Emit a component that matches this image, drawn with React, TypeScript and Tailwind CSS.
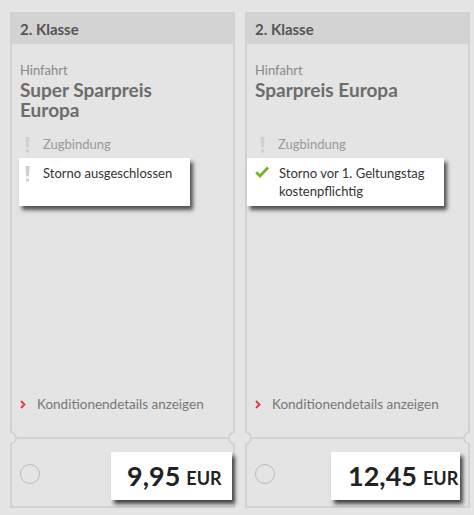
import type { ReactNode } from "react";

type Offer = {
  title: string;
  note: ReactNode;
  noteIcon: "warn" | "check";
  noteBox: string;
  noteRow: string;
  iconSlot: string;
  price: string;
  priceBox: string;
};

const offers: Offer[] = [
  {
    title: "Super Sparpreis Europa",
    note: "Storno ausgeschlossen",
    noteIcon: "warn",
    noteBox: "ml-[7px] w-[171px]",
    noteRow: "pl-[6px]",
    iconSlot: "w-[18px]",
    price: "9,95",
    priceBox: "ml-[99px] w-[121px] pl-[16px]",
  },
  {
    title: "Sparpreis Europa",
    note: (
      <>
        Storno vor 1. Geltungstag
        <br />
        kostenpflichtig
      </>
    ),
    noteIcon: "check",
    noteBox: "ml-0 w-[197px]",
    noteRow: "pl-[8px]",
    iconSlot: "w-[24px]",
    price: "12,45",
    priceBox: "ml-[84px] w-[129px] pl-[17px]",
  },
];

function Bang() {
  return (
    <svg width="5" height="16" viewBox="0 0 5 16" className="shrink-0">
      <path d="M0.4 0 H4.6 L3.8 10.5 H1.2 Z" fill="#cfcfcf" />
      <rect x="1" y="12.5" width="3" height="3" fill="#cfcfcf" />
    </svg>
  );
}

function Check() {
  return (
    <svg width="14" height="12" viewBox="0 0 14 12" className="shrink-0">
      <path d="M1.2 6.2 L5 10 L13 1.5" fill="none" stroke="#78b41e" strokeWidth="2.8" />
    </svg>
  );
}

function Notch({ side }: { side: "left" | "right" }) {
  return (
    <div
      className={`absolute top-[-8px] h-[14px] w-[8px] overflow-hidden ${
        side === "left" ? "left-[-2px]" : "right-[-2px]"
      }`}
    >
      <div
        className={`h-[14px] w-[14px] rounded-full border-2 border-[#d2d2d2] bg-[#e5e5e5] ${
          side === "left" ? "-ml-[7px]" : "ml-[1px]"
        }`}
      />
    </div>
  );
}

function OfferCard({ offer }: { offer: Offer }) {
  return (
    <div className="flex h-[496px] w-[225px] flex-col border-2 border-[#d2d2d2] bg-[#e4e4e4]">
      <div className="flex h-[30px] items-center bg-[#d3d3d3] px-[8px] text-[15px] font-bold text-[#555]">
        2. Klasse
      </div>

      <div className="flex flex-1 flex-col pt-[18px]">
        <div className="px-[8px] text-[13px] leading-[16px] text-[#888]">Hinfahrt</div>
        <h2 className="mt-[2px] h-[40px] max-w-[200px] pl-[8px] text-[19px] font-bold leading-[20px] text-[#6c6c6c]">
          {offer.title}
        </h2>

        <div className="mt-[16px] flex h-[18px] items-center text-[13px] text-[#999]">
          <span className="flex w-[31px] pl-[13px]">
            <Bang />
          </span>
          Zugbindung
        </div>

        <div
          className={`mt-[4px] h-[48px] bg-white pt-[6px] shadow-[3px_4px_4px_rgba(0,0,0,0.65)] ${offer.noteBox}`}
        >
          <div className={`flex items-start text-[13px] leading-[18px] text-[#333] ${offer.noteRow}`}>
            <span className={`flex shrink-0 pt-[2px] ${offer.iconSlot}`}>
              {offer.noteIcon === "warn" ? <Bang /> : <Check />}
            </span>
            <span>{offer.note}</span>
          </div>
        </div>

        <div className="mt-auto mb-[24px] flex h-[18px] items-center pl-[8px] text-[13.5px] text-[#777]">
          <svg width="6" height="9" viewBox="0 0 6 9" className="mr-[11px] shrink-0">
            <path d="M1 1 L4.5 4.5 L1 8" fill="none" stroke="#e2363f" strokeWidth="1.8" />
          </svg>
          Konditionendetails anzeigen
        </div>
      </div>

      <div className="relative h-[69px] border-t-2 border-[#d2d2d2] pt-[13px]">
        <Notch side="left" />
        <Notch side="right" />
        <div className="flex items-center">
          <div className="absolute left-[8px] top-[25px] h-[20px] w-[20px] rounded-full border-[1.5px] border-[#b9b9b9]" />
          <div
            className={`flex h-[48px] items-center whitespace-nowrap bg-white shadow-[3px_4px_4px_rgba(0,0,0,0.7)] ${offer.priceBox}`}
          >
            <span className="text-[27px] font-bold text-[#222]">{offer.price}</span>
            <span className="ml-[6px] mt-[4px] text-[18px] font-bold text-[#222]">EUR</span>
          </div>
        </div>
      </div>
    </div>
  );
}

export default function App() {
  return (
    <div className="flex min-h-[515px] gap-[10px] bg-[#e5e5e5] pl-[10px] pt-[12px] font-['Lato',sans-serif]">
      {offers.map((o) => (
        <OfferCard key={o.title} offer={o} />
      ))}
    </div>
  );
}
